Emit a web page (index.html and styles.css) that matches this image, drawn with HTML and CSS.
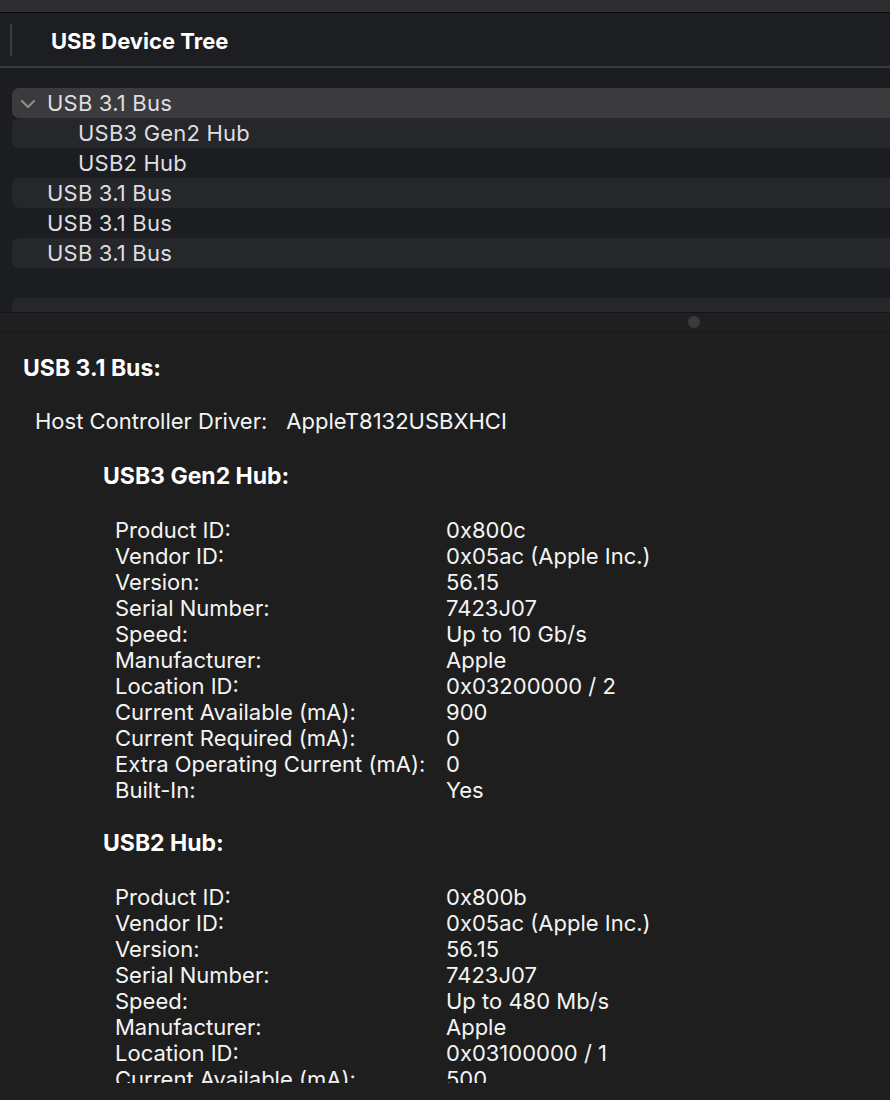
FILE: index.html
```html
<!DOCTYPE html>
<html>
<head>
<meta charset="utf-8">
<link rel="stylesheet" href="styles.css">
</head>
<body>
<div class="window">
  <div class="topbar"></div>
  <div class="header">
    <div class="sep"></div>
    <div class="title">USB Device Tree</div>
  </div>
  <div class="tree">
    <div class="row sel">
      <svg class="chev" width="16" height="10" viewBox="0 0 16 10"><path d="M2 2 L8 8 L14 2" fill="none" stroke="#8d8d90" stroke-width="2.2" stroke-linecap="round" stroke-linejoin="round"/></svg>
      <span class="lbl">USB 3.1 Bus</span>
    </div>
    <div class="row alt child"><span class="lbl">USB3 Gen2 Hub</span></div>
    <div class="row child"><span class="lbl">USB2 Hub</span></div>
    <div class="row alt"><span class="lbl">USB 3.1 Bus</span></div>
    <div class="row"><span class="lbl">USB 3.1 Bus</span></div>
    <div class="row alt"><span class="lbl">USB 3.1 Bus</span></div>
    <div class="row"></div>
    <div class="row alt"></div>
  </div>
  <div class="divider"><div class="knob"></div></div>
  <div class="detail">
    <div class="h1">USB 3.1 Bus:</div>
    <div class="driver"><span class="dlabel">Host Controller Driver:</span><span>AppleT8132USBXHCI</span></div>
    <div class="h2">USB3 Gen2 Hub:</div>
    <div class="props">
      <div class="k">Product ID:</div><div class="v">0x800c</div>
      <div class="k">Vendor ID:</div><div class="v">0x05ac (Apple Inc.)</div>
      <div class="k">Version:</div><div class="v">56.15</div>
      <div class="k">Serial Number:</div><div class="v">7423J07</div>
      <div class="k">Speed:</div><div class="v">Up to 10 Gb/s</div>
      <div class="k">Manufacturer:</div><div class="v">Apple</div>
      <div class="k">Location ID:</div><div class="v">0x03200000 / 2</div>
      <div class="k">Current Available (mA):</div><div class="v">900</div>
      <div class="k">Current Required (mA):</div><div class="v">0</div>
      <div class="k">Extra Operating Current (mA):</div><div class="v">0</div>
      <div class="k">Built-In:</div><div class="v">Yes</div>
    </div>
    <div class="h2">USB2 Hub:</div>
    <div class="props">
      <div class="k">Product ID:</div><div class="v">0x800b</div>
      <div class="k">Vendor ID:</div><div class="v">0x05ac (Apple Inc.)</div>
      <div class="k">Version:</div><div class="v">56.15</div>
      <div class="k">Serial Number:</div><div class="v">7423J07</div>
      <div class="k">Speed:</div><div class="v">Up to 480 Mb/s</div>
      <div class="k">Manufacturer:</div><div class="v">Apple</div>
      <div class="k">Location ID:</div><div class="v">0x03100000 / 1</div>
      <div class="k">Current Available (mA):</div><div class="v">500</div>
    </div>
  </div>
  <div class="bottom"></div>
</div>
</body>
</html>
```
FILE: styles.css
```css
* { box-sizing: border-box; }
html, body { margin: 0; padding: 0; background: #1e1e1e; }
body { font-family: "Inter", "Liberation Sans", sans-serif; width: 890px; height: 1100px; overflow: hidden; }
.window { width: 890px; height: 1100px; display: flex; flex-direction: column; }
.topbar { height: 13px; background: #2e2e30; border-bottom: 1px solid #0b0b0c; flex: none; }
.header { background: #1c1e21; display: flex; align-items: center; flex: none; border-bottom: 2px solid #383b3e; height: 55px; }
.sep { width: 2px; height: 32px; background: #3a3d40; margin-left: 10px; }
.title { margin-left: 39px; margin-top: 2px; color: #ffffff; font-weight: 700; font-size: 22px; }
.tree { height: 245px; background: #1c1d21; padding-top: 20px; overflow: hidden; flex: none; border-bottom: 1px solid #151517; }
.row { height: 30px; margin-left: 12px; border-radius: 7px 0 0 7px; display: flex; align-items: center; padding-left: 35px; color: #dedee0; font-size: 22px; letter-spacing: 0.2px; position: relative; }
.row.alt { background: #26272b; }
.row.sel { background: #3b3b3d; }
.row.child { padding-left: 66px; }
.chev { position: absolute; left: 8px; top: 11px; }
.divider { height: 19px; background: #1f1f1f; border-bottom: 1px solid #19191a; flex: none; display: flex; align-items: center; }
.knob { width: 12px; height: 12px; border-radius: 50%; background: #3a3a3c; margin-left: 688px; }
.detail { flex: none; height: 751px; overflow: hidden; background: #1e1e1e; color: #f4f4f4; font-size: 22px; line-height: 26px; padding-top: 23px; }
.h1 { font-weight: 700; font-size: 23px; margin-left: 23px; color: #fff; }
.driver { margin-left: 35px; margin-top: 27px; }
.dlabel { margin-right: 19px; }
.h2 { font-weight: 700; font-size: 23px; margin-left: 103px; margin-top: 29px; color: #fff; }
.props { margin-left: 115px; margin-top: 28px; display: grid; grid-template-columns: 331px auto; }
.props + .h2 { margin-top: 27px; }
.bottom { flex: 1; background: #1e1e1e; }
```
